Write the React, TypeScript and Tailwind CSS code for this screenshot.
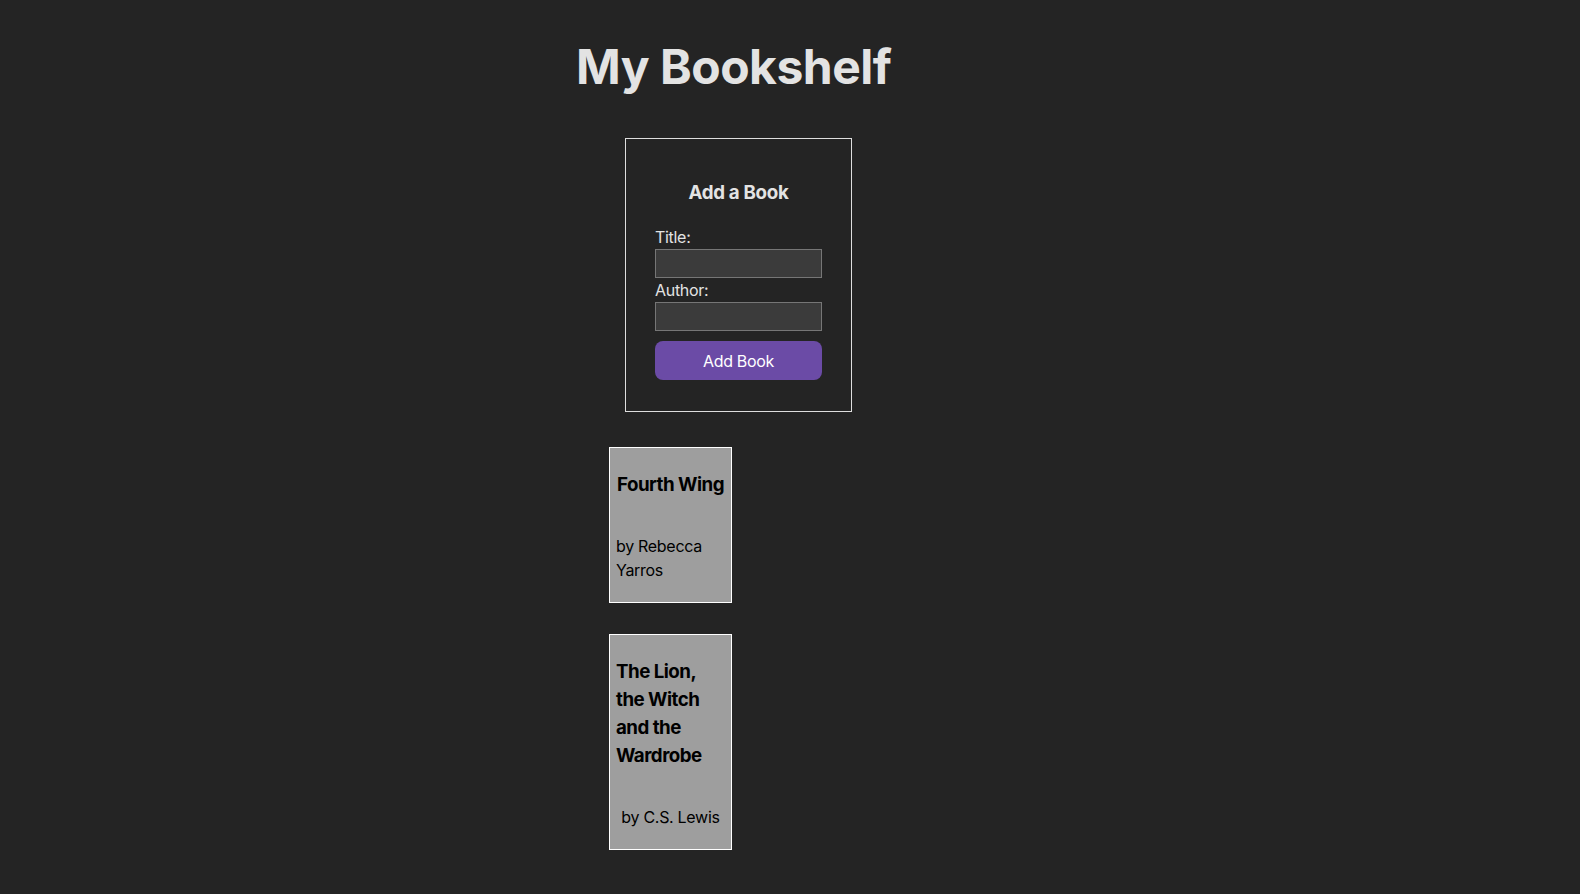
const books = [
  { title: "Fourth Wing", author: "Rebecca Yarros" },
  { title: "The Lion, the Witch and the Wardrobe", author: "C.S. Lewis" },
];

function BookCard({ title, author }: { title: string; author: string }) {
  return (
    <div className="w-[123px] border border-white bg-[#9e9e9e] px-[6px] py-[4px] flex flex-col items-center text-left text-black">
      <h3 className="my-[19px] text-[18.72px] font-bold leading-[28px] tracking-[-0.5px]">{title}</h3>
      <p className="my-4 text-base leading-6 tracking-[-0.3px]">by {author}</p>
    </div>
  );
}

export default function App() {
  return (
    <div
      className="min-h-screen bg-[#242424] text-[#e3e3e3]"
      style={{ fontFamily: "Inter, 'Noto Sans', sans-serif" }}
    >
      <div className="flex flex-col items-start pb-10">
        {/* header */}
        <h1 className="ml-[576px] mt-[43px] text-[48px] font-bold leading-none tracking-[-0.5px]">
          My Bookshelf
        </h1>

        {/* add form */}
        <form
          className="ml-[625px] mt-[47px] w-[227px] border border-[#dedede] px-[29px] pt-[40px] pb-[31px]"
          onSubmit={(e) => e.preventDefault()}
        >
          <h3 className="text-center text-[18.72px] font-bold leading-[28px] mb-[18px] tracking-[-0.3px]">Add a Book</h3>
          <label className="block text-base leading-6 tracking-[-0.3px]">Title:</label>
          <input
            type="text"
            className="block w-full h-[29px] border border-[#767676] bg-[#3b3b3b] px-1 text-white outline-none"
          />
          <label className="block text-base leading-6 tracking-[-0.3px]">Author:</label>
          <input
            type="text"
            className="block w-full h-[29px] border border-[#767676] bg-[#3b3b3b] px-1 text-white outline-none"
          />
          <button
            type="submit"
            className="mt-[10px] w-full h-[39px] rounded-lg bg-[#6b4ba6] text-base text-white tracking-[-0.3px]"
          >
            Add Book
          </button>
        </form>

        {/* books */}
        <div className="ml-[609px] mt-[35px] flex flex-col gap-[31px]">
          {books.map((b) => (
            <BookCard key={b.title} title={b.title} author={b.author} />
          ))}
        </div>
      </div>
    </div>
  );
}
